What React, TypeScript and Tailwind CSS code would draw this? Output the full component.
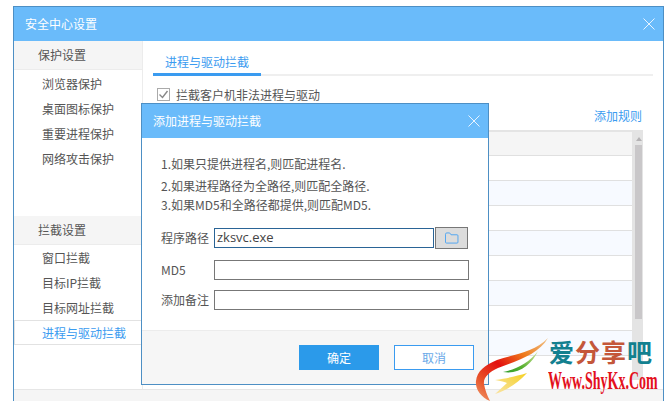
import React from "react";

const cjk = { fontFamily: '"Noto Sans CJK SC", sans-serif' };

function Close({ className }: { className: string }) {
  return (
    <svg viewBox="0 0 12 12" className={className} fill="none" stroke="#e8f4ff" strokeWidth="1">
      <path d="M0.5 0.5 L11.5 11.5 M11.5 0.5 L0.5 11.5" />
    </svg>
  );
}

function SideHead({ children }: { children: React.ReactNode }) {
  return (
    <div className="h-[29px] bg-[#f5f5f5] border-b border-[#ececec] pl-[24px] flex items-center text-[#555]">{children}</div>
  );
}

function SideItem({ children }: { children: React.ReactNode }) {
  return <div className="h-[25px] pl-[28px] flex items-center text-[#555]">{children}</div>;
}

function Field({ label, children }: { label: string; children: React.ReactNode }) {
  return (
    <div className="flex items-center">
      <span className="w-[53px] text-[#555]">{label}</span>
      {children}
    </div>
  );
}

export default function App() {
  const rows = [false, true, false, true, false, true, false, true, false];
  return (
    <div style={cjk} className="relative w-[665px] h-[401px] bg-white overflow-hidden text-[12px] pt-[6px] pl-[13px]">
      <div className="w-[651px] h-[395px] border-t border-x border-[#4d8fc4] flex flex-col bg-white">
        <div className="h-[34px] shrink-0 bg-[#6abbfa] flex items-center justify-between pl-[11px] pr-[8px] text-white">
          <span>安全中心设置</span>
          <Close className="w-[12px] h-[12px]" />
        </div>
        <div className="flex-1 flex min-h-0">
          <div className="w-[129px] shrink-0 border-r border-[#ececec]">
            <SideHead>保护设置</SideHead>
            <div className="h-px" />
            <SideItem>浏览器保护</SideItem>
            <SideItem>桌面图标保护</SideItem>
            <SideItem>重要进程保护</SideItem>
            <SideItem>网络攻击保护</SideItem>
            <div className="h-[45px]" />
            <SideHead>拦截设置</SideHead>
            <SideItem>窗口拦截</SideItem>
            <SideItem>目标IP拦截</SideItem>
            <SideItem>目标网址拦截</SideItem>
            <div className="h-[25px] border-y border-l border-[#e2e2e2] pl-[27px] flex items-center text-[#3a9bf0]">进程与驱动拦截</div>
          </div>
          <div className="flex-1 pl-[10px] pr-[10px] min-w-0">
            <div className="h-[35px] border-b-2 border-[#efefef]">
              <div className="w-[108px] h-[35px] border-b-[3px] border-[#3a9bf0] pl-[12px] pt-[11px] text-[#3a9bf0] leading-[20px]">进程与驱动拦截</div>
            </div>
            <div className="mt-[12px] pl-[4px] flex items-center h-[13px] text-[#555]">
              <span className="w-[13px] h-[13px] border border-[#aaa] flex items-center justify-center">
                <svg viewBox="0 0 11 11" className="w-[11px] h-[11px]" fill="none" stroke="#888" strokeWidth="1.4">
                  <path d="M1.5 5.5 L4.5 8.5 L9.5 2" />
                </svg>
              </span>
              <span className="ml-[6px]">拦截客户机非法进程与驱动</span>
            </div>
            <div className="mt-[5px] w-[489px] flex justify-end h-[20px] items-center text-[#3a9bf0]">添加规则</div>
            <div className="mt-[4px] w-[490px] h-[250px] bg-[#e4e4e4] pt-[2px] flex">
              <div className="flex-1 flex flex-col overflow-hidden">
                <div className="h-[23px] bg-[#f5f5f5] shrink-0 border-b border-[#e0e0e0] box-content" />
                {rows.map((b, i) => (
                  <div
                    key={i}
                    className={`h-[25px] shrink-0 border-b border-[#e0e0e0] ${b ? "bg-[#f7faff]" : "bg-white"}`}
                  />
                ))}
              </div>
              <div className="w-[11px] shrink-0 flex flex-col items-center pl-[2px]">
                <svg viewBox="0 0 8 6" className="w-[8px] h-[6px] mt-[4px] mb-[3px]">
                  <path d="M4 1 L7 5 L1 5 Z" fill="#b5b3b5" />
                </svg>
                <div className="w-[7px] h-[174px] bg-[#c9c7c9]" />
              </div>
            </div>
          </div>
        </div>
        <div className="h-[12px] shrink-0 bg-[#f5f5f5] border-t border-[#e6e6e6]" />
      </div>

      <div className="absolute left-[141px] top-[103px] w-[348px] h-[282px] border border-[#4d8fc4] bg-white flex flex-col">
        <div className="h-[34px] shrink-0 bg-[#6abbfa] flex items-center justify-between pl-[11px] pr-[8px] text-white">
          <span>添加进程与驱动拦截</span>
          <Close className="w-[12px] h-[12px]" />
        </div>
        <div className="flex-1 pl-[19px] pt-[16px]">
          <div className="flex flex-col text-[#555] leading-[19px]">
            <div className="mb-[3px]">1.如果只提供进程名,则匹配进程名.</div>
            <div>2.如果进程路径为全路径,则匹配全路径.</div>
            <div>3.如果MD5和全路径都提供,则匹配MD5.</div>
          </div>
          <div className="mt-[13px] flex flex-col">
            <Field label="程序路径">
              <div className="w-[220px] h-[20px] border border-[#2a6496] flex items-center pl-[2px] text-[#444] text-[13px]" style={{ fontFamily: '"Open Sans", sans-serif' }}>
                zksvc.exe
              </div>
              <div className="ml-[1px] w-[33px] h-[22px] bg-[#dcdcdc] border border-[#777] flex items-center justify-center">
                <svg viewBox="0 0 16 13" className="w-[15px] h-[12px]" fill="none" stroke="#4aa3f2" strokeWidth="1">
                  <path d="M1.5 2.5 Q1.5 1 3 1 H6 L7.5 3 H14 Q15 3 15 4 V11 Q15 12 14 12 H2.5 Q1.5 12 1.5 11 Z" />
                </svg>
              </div>
            </Field>
            <div className="mt-[11px]">
              <Field label="MD5">
                <div className="w-[255px] h-[20px] border border-[#777]" />
              </Field>
            </div>
            <div className="mt-[10px]">
              <Field label="添加备注">
                <div className="w-[255px] h-[20px] border border-[#777]" />
              </Field>
            </div>
          </div>
        </div>
        <div className="h-[54px] shrink-0 bg-[#f6f6f6] border-t border-[#ececec] flex items-center justify-end pr-[14px] gap-[15px]">
          <div className="w-[80px] h-[25px] bg-[#2b9aea] text-white flex items-center justify-center">确定</div>
          <div className="w-[80px] h-[25px] border border-[#3a9bf0] text-[#6aa9e8] bg-white flex items-center justify-center">取消</div>
        </div>
      </div>

      <svg viewBox="0 0 85 71" className="absolute left-[465px] top-[330px] w-[85px] h-[71px]">
        <defs>
          <linearGradient id="sw" x1="1" y1="0" x2="0" y2="1">
            <stop offset="0" stopColor="#f0c48a" />
            <stop offset="0.3" stopColor="#ee7a1c" />
            <stop offset="0.55" stopColor="#e3100f" />
            <stop offset="0.8" stopColor="#e8542a" />
            <stop offset="1" stopColor="#f0a070" />
          </linearGradient>
          <linearGradient id="gr" x1="1" y1="0" x2="0" y2="1">
            <stop offset="0" stopColor="#d8e8a0" />
            <stop offset="0.6" stopColor="#58b030" />
            <stop offset="1" stopColor="#2e9c2a" />
          </linearGradient>
          <linearGradient id="ye" x1="1" y1="0" x2="0" y2="1">
            <stop offset="0" stopColor="#f5d020" />
            <stop offset="1" stopColor="#f9e4a8" />
          </linearGradient>
        </defs>
        <path d="M83 8 C74 24 52 31 33 38 C24 42 18 48 19 54 C20 60 22 65 25 71 C15 67 10 58 11 51 C12 41 20 35 32 30 C50 24 70 22 83 8 Z" fill="url(#sw)" />
        <path d="M73 21 C67 34 54 45 38 42 C52 39 64 33 73 21 Z" fill="url(#gr)" />
        <path d="M62 43 C52 46 44 48 30 50 C36 51 40 52 42 53 C38 57 34 60 30 64 C42 60 52 54 62 43 Z" fill="url(#ye)" />
      </svg>
      <div className="absolute left-[549px] top-[336px] w-[106px] tracking-[1px] text-[25px] leading-[30px] font-bold whitespace-nowrap">
        <span className="text-[#12808f]">爱</span>
        <span className="text-[#c4573a]">分享</span>
        <span className="text-[#12808f]">吧</span>
      </div>
      <div
        className="absolute left-[548px] top-[368px] origin-left scale-x-[0.56] text-[25px] leading-[26px] font-bold text-[#e3101c] whitespace-nowrap"
        style={{ fontFamily: '"Liberation Serif", serif' }}
      >
        Www.ShyKx.Com
      </div>
    </div>
  );
}
